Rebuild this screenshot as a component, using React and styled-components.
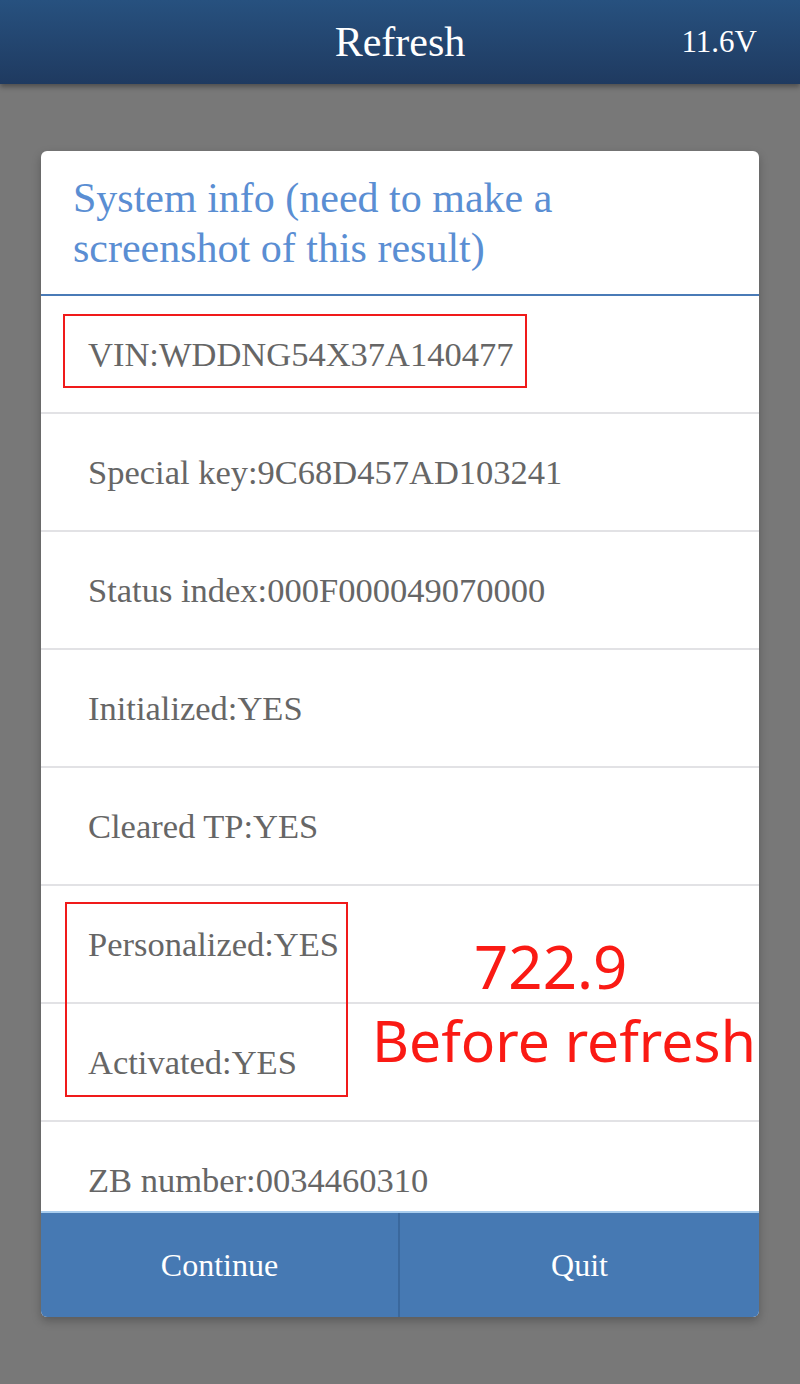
import React from "react";
import styled, { createGlobalStyle } from "styled-components";

const Global = createGlobalStyle`
  html, body { margin: 0; padding: 0; background: #787878; }
  body { font-family: "Liberation Serif", "Times New Roman", serif; }
`;

const Page = styled.div`
  width: 800px;
  height: 1384px;
  background: #787878;
  display: flex;
  flex-direction: column;
  overflow: hidden;
`;

const Header = styled.header`
  height: 84px;
  flex: none;
  background: linear-gradient(#27517f, #1f3a60);
  box-shadow: 0 3px 5px rgba(0, 0, 0, 0.35);
  display: grid;
  grid-template-columns: 1fr auto 1fr;
  align-items: center;
  color: #fff;
  position: relative;
  z-index: 1;
`;

const Title = styled.h1`
  grid-column: 2;
  margin: 0;
  font-weight: normal;
  font-size: 42px;
  line-height: 1;
`;

const Voltage = styled.span`
  justify-self: end;
  padding-right: 43px;
  font-size: 31px;
`;

const Dialog = styled.section`
  margin: 67px 41px 0;
  height: 1166px;
  background: #fff;
  border-radius: 6px;
  overflow: hidden;
  display: flex;
  flex-direction: column;
  box-shadow: 0 4px 10px rgba(0, 0, 0, 0.25);
`;

const DialogTitle = styled.h2`
  margin: 0;
  flex: none;
  height: 145px;
  box-sizing: border-box;
  padding: 22px 32px 0 32px;
  font-weight: normal;
  font-size: 42px;
  line-height: 50px;
  color: #5a8ed3;
  border-bottom: 2px solid #4a7bb7;
`;

const Body = styled.div`
  position: relative;
  flex: 1;
  overflow: hidden;
`;

const Row = styled.div`
  height: 118px;
  box-sizing: border-box;
  border-bottom: 2px solid #e2e2e5;
  display: flex;
  align-items: center;
  padding: 0 0 0 47px;
  font-size: 34.5px;
  color: #666;
`;

const Box = styled.div`
  position: absolute;
  border: 2px solid #f01a1a;
  box-sizing: border-box;
  pointer-events: none;
`;

const Note = styled.div`
  position: absolute;
  font-family: "Noto Sans", "Open Sans", sans-serif;
  color: #fa1a14;
  line-height: 1;
  white-space: nowrap;
`;

const Buttons = styled.div`
  flex: none;
  height: 106px;
  box-sizing: border-box;
  border-top: 2px solid #a9cdee;
  display: grid;
  grid-template-columns: 357px 1fr;
  background: #4679b3;
`;

const Button = styled.button`
  border: none;
  background: transparent;
  color: #fff;
  font-family: "Liberation Serif", "Times New Roman", serif;
  font-size: 32px;
  padding: 0;
  border-left: ${(p) => (p.$divider ? "2px solid #3a689d" : "none")};
`;

const rows = [
  "VIN:WDDNG54X37A140477",
  "Special key:9C68D457AD103241",
  "Status index:000F000049070000",
  "Initialized:YES",
  "Cleared TP:YES",
  "Personalized:YES",
  "Activated:YES",
  "ZB number:0034460310",
];

export default function App() {
  return (
    <Page>
      <Global />
      <Header>
        <Title>Refresh</Title>
        <Voltage>11.6V</Voltage>
      </Header>
      <Dialog>
        <DialogTitle>
          System info (need to make a
          <br />
          screenshot of this result)
        </DialogTitle>
        <Body>
          {rows.map((r) => (
            <Row key={r}>{r}</Row>
          ))}
          <Box style={{ left: 22, top: 18, width: 464, height: 74 }} />
          <Box style={{ left: 24, top: 606, width: 283, height: 195 }} />
          <Note style={{ left: 433, top: 640, fontSize: 60 }}>722.9</Note>
          <Note style={{ left: 331, top: 716, fontSize: 57 }}>Before refresh</Note>
        </Body>
        <Buttons>
          <Button>Continue</Button>
          <Button $divider>Quit</Button>
        </Buttons>
      </Dialog>
    </Page>
  );
}
